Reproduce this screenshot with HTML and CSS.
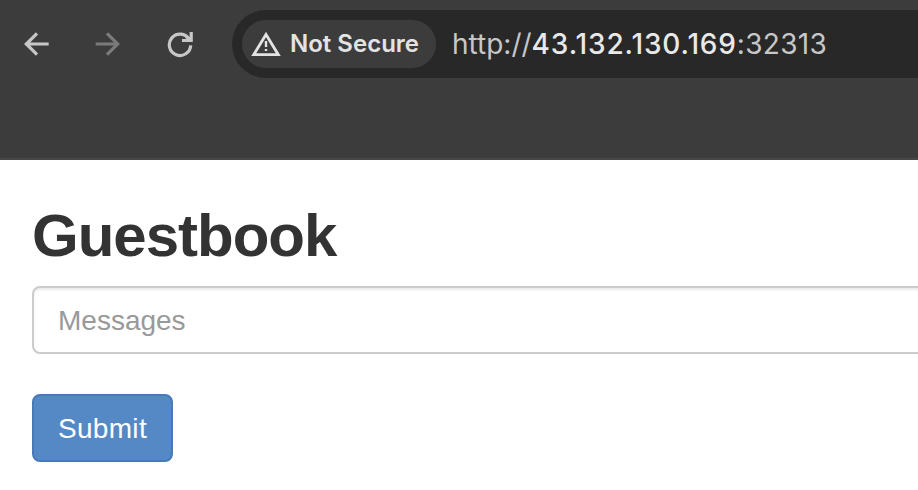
FILE: index.html
```html
<!DOCTYPE html>
<html lang="en">
<head>
<meta charset="utf-8">
<title>Guestbook</title>
<link rel="stylesheet" href="styles.css">
</head>
<body>
<header class="chrome">
  <nav class="toolbar">
    <svg class="icon back" viewBox="0 0 28 28"><path d="M26.700 14H5M15 3.300L4.300 14L15 24.700"/></svg>
    <svg class="icon forward" viewBox="0 0 28 28"><path d="M1.700 14H23M13 3.300L23.700 14L13 24.700"/></svg>
    <svg class="icon reload" viewBox="0 0 28 28"><path d="M23.200 9.300A10.700 10.700 0 1 0 24.700 15.300M25.200 2V10.500H16M20 6.500L24.500 10"/></svg>
    <div class="address">
      <div class="chip">
        <svg class="warning" viewBox="0 0 30 26"><path d="M15 3.500L27.300 23.700H2.700Z"/><path class="mark" d="M15 10V16M15 18V20"/></svg>
        <span class="chip-text">Not Secure</span>
      </div>
      <span class="url">http://<b>43.132.130.169</b><span class="port">:32313</span></span>
    </div>
  </nav>
</header>
<main class="page">
  <h1 class="title">Guestbook</h1>
  <form>
    <input class="field" type="text" placeholder="Messages">
    <button class="submit" type="button">Submit</button>
  </form>
</main>
</body>
</html>
```
FILE: styles.css
```css
* { box-sizing: border-box; }
body { margin: 0; height: 490px; overflow: hidden; background: #fff; font-family: "Liberation Sans", Arial, sans-serif; }
.chrome { height: 160px; padding-top: 10px; background: #3c3c3c; border-bottom: 2px solid #474747; }
.toolbar { display: flex; align-items: center; height: 68px; padding-left: 22px; }
.icon { width: 28px; height: 28px; flex: none; fill: none; stroke: #c7c7c7; stroke-width: 3.2; }
.forward { margin-left: 44px; stroke: #7b7b7b; }
.reload { margin-left: 44px; }
.address { display: flex; align-items: center; flex: 1; height: 68px; margin-left: 38px; padding-left: 10px; border-radius: 34px 0 0 34px; background: #282828; white-space: nowrap; }
.chip { display: flex; align-items: center; width: 194px; height: 48px; padding-left: 9px; border-radius: 24px; background: #3c3c3c; color: #e3e3e3; }
.warning { width: 30px; height: 26px; flex: none; fill: none; stroke: #e3e3e3; stroke-width: 2.8; }
.warning .mark { stroke-width: 2.4; }
.chip-text { margin-left: 9px; padding-bottom: 1px; font: 600 24px Inter, sans-serif; }
.url { margin-left: 16px; font: 400 28px Inter, sans-serif; color: #c7c7c7; }
.url b { font-weight: 500; letter-spacing: 0.86px; color: #e9e9e9; }
.port { letter-spacing: 0.3px; }
.page { padding: 40px 0 0 32px; color: #333; }
.title { margin: 0; font-size: 60px; line-height: 71px; font-weight: 700; letter-spacing: -1px; }
.field { display: block; width: 920px; height: 68px; margin-top: 15px; padding: 2px 24px 0; border: 2px solid #ccc; border-radius: 8px; font: 28px "Liberation Sans", Arial, sans-serif; box-shadow: inset 0 2px 2px rgba(0,0,0,.075); }
.field::placeholder { color: #999; }
.submit { display: block; width: 141px; height: 68px; margin-top: 40px; padding: 2px 0 0; border: 2px solid #4879b9; border-radius: 8px; background: #5589c5; color: #fff; font: 28px "Liberation Sans", Arial, sans-serif; letter-spacing: 0.3px; }
```
